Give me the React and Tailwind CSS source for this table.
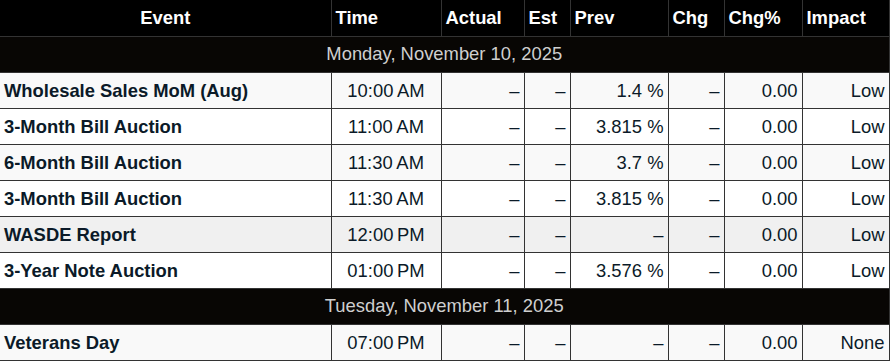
import React from 'react';

const cols = [
  { label: 'Event', w: 'w-[331px]', head: 'text-center' },
  { label: 'Time', w: 'w-[110px]', head: 'text-left' },
  { label: 'Actual', w: 'w-[83px]', head: 'text-left' },
  { label: 'Est', w: 'w-[46px]', head: 'text-left' },
  { label: 'Prev', w: 'w-[98px]', head: 'text-left' },
  { label: 'Chg', w: 'w-[56px]', head: 'text-left' },
  { label: 'Chg%', w: 'w-[78px]', head: 'text-left' },
  { label: 'Impact', w: 'w-[87px]', head: 'text-left' },
];

const days = [
  {
    date: 'Monday, November 10, 2025',
    rows: [
      ['Wholesale Sales MoM (Aug)', '10:00\u202FAM', '1.4 %', 'Low'],
      ['3-Month Bill Auction', '11:00\u202FAM', '3.815 %', 'Low'],
      ['6-Month Bill Auction', '11:30\u202FAM', '3.7 %', 'Low'],
      ['3-Month Bill Auction', '11:30\u202FAM', '3.815 %', 'Low'],
      ['WASDE Report', '12:00\u202FPM', '–', 'Low', true],
      ['3-Year Note Auction', '01:00\u202FPM', '3.576 %', 'Low'],
    ],
  },
  {
    date: 'Tuesday, November 11, 2025',
    rows: [['Veterans Day', '07:00\u202FPM', '–', 'None']],
  },
];

const td = 'border border-[#333] px-1 h-9 pt-px pb-0';

export default function App() {
  return (
    <div className="bg-white w-[895px] h-[362px] overflow-hidden font-['Liberation_Sans',Arial,sans-serif] text-[18.4px] text-[#0b1a28]">
      <table className="w-[889px] table-fixed border-collapse">
        <thead>
          <tr className="bg-black text-white">
            {cols.map((c) => (
              <th key={c.label} className={`${c.w} ${c.head} border border-[#333] border-t-0 border-l-0 px-1 h-9 font-bold`}>
                {c.label}
              </th>
            ))}
          </tr>
        </thead>
        <tbody>
          {days.map((d) => (
            <React.Fragment key={d.date}>
              <tr className="bg-[#080604]">
                <td colSpan={8} className="border border-[#333] border-l-0 h-9 text-center text-[#cfcfcf]">
                  {d.date}
                </td>
              </tr>
              {d.rows.map(([name, time, prev, impact, hl], i) => (
                <tr key={name + i} className={hl ? 'bg-[#f0f0f0]' : i % 2 === 0 ? 'bg-[#f9f9f9]' : 'bg-white'}>
                  <td className={`${td} border-l-0 font-bold text-left`}>{name}</td>
                  <td className={`${td} text-center`}>{time}</td>
                  <td className={`${td} text-right`}>–</td>
                  <td className={`${td} text-right`}>–</td>
                  <td className={`${td} text-right`}>{prev}</td>
                  <td className={`${td} text-right`}>–</td>
                  <td className={`${td} text-right`}>0.00</td>
                  <td className={`${td} text-right`}>{impact}</td>
                </tr>
              ))}
            </React.Fragment>
          ))}
        </tbody>
      </table>
    </div>
  );
}
